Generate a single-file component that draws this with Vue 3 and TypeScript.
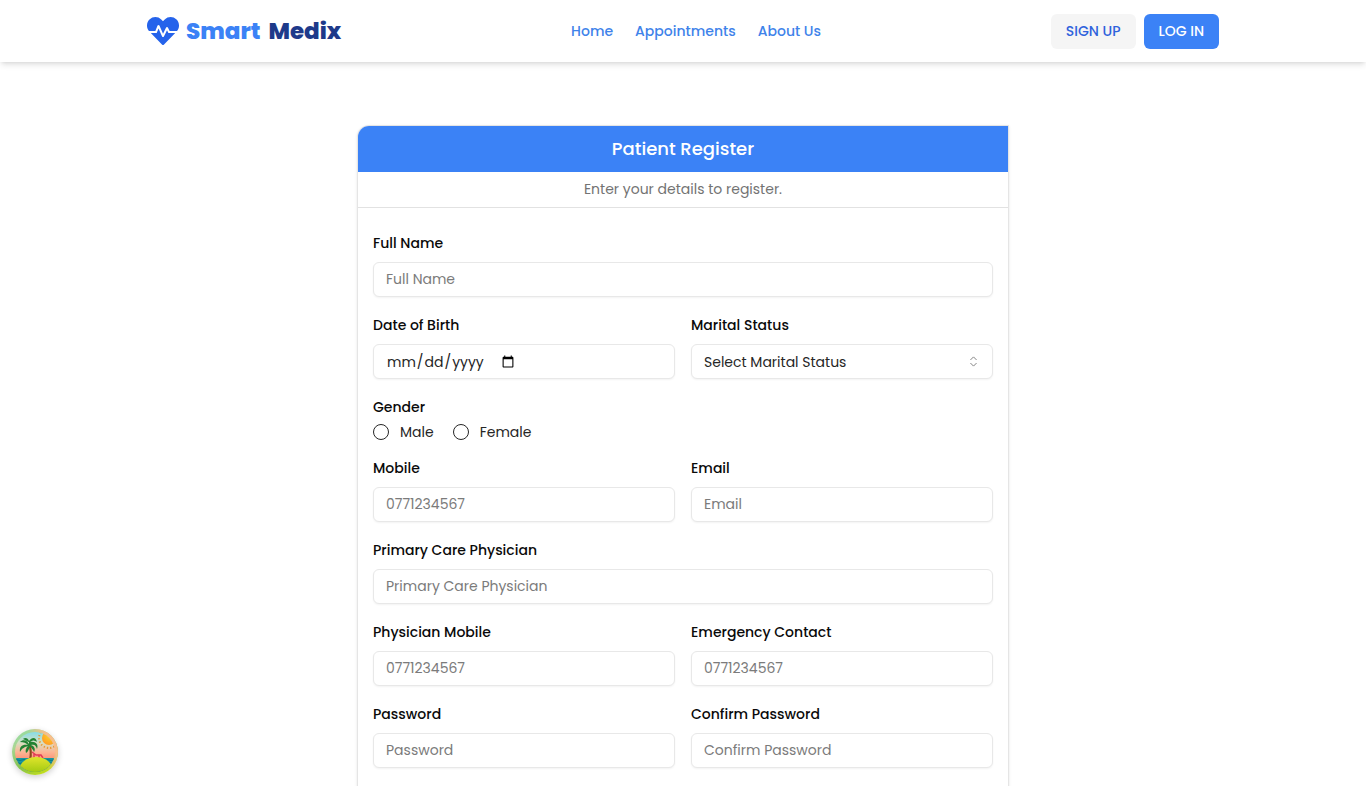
<script setup lang="ts">
import { reactive } from 'vue'

interface Field {
  id: string
  label: string
  placeholder?: string
  type: 'text' | 'tel' | 'email' | 'password' | 'date' | 'select' | 'radio'
  wide?: boolean
  options?: string[]
}

const links = ['Home', 'Appointments', 'About Us']

const fields: Field[] = [
  { id: 'fullName', label: 'Full Name', placeholder: 'Full Name', type: 'text', wide: true },
  { id: 'birthDate', label: 'Date of Birth', type: 'date' },
  {
    id: 'maritalStatus',
    label: 'Marital Status',
    placeholder: 'Select Marital Status',
    type: 'select',
    options: ['Single', 'Married', 'Divorced', 'Widowed'],
  },
  { id: 'gender', label: 'Gender', type: 'radio', wide: true, options: ['Male', 'Female'] },
  { id: 'mobile', label: 'Mobile', placeholder: '0771234567', type: 'tel' },
  { id: 'email', label: 'Email', placeholder: 'Email', type: 'email' },
  { id: 'physician', label: 'Primary Care Physician', placeholder: 'Primary Care Physician', type: 'text', wide: true },
  { id: 'physicianMobile', label: 'Physician Mobile', placeholder: '0771234567', type: 'tel' },
  { id: 'emergency', label: 'Emergency Contact', placeholder: '0771234567', type: 'tel' },
  { id: 'password', label: 'Password', placeholder: 'Password', type: 'password' },
  { id: 'confirmPassword', label: 'Confirm Password', placeholder: 'Confirm Password', type: 'password' },
]

const form = reactive<Record<string, string>>(Object.fromEntries(fields.map((f) => [f.id, ''])))
</script>

<template>
  <div class="page">
    <header class="topbar">
      <div class="topbar-inner">
        <a class="brand" href="#">
          <svg class="brand-icon" viewBox="0 0 512 512" aria-hidden="true">
            <path
              fill="currentColor"
              d="M320.2 243.8l-49.7 99.4c-6 12.1-23.4 11.7-28.9-.6l-56.9-126.3-30 71.7H60.6l182.5 186.5c7.1 7.3 18.6 7.3 25.7 0L451.4 288H342.3l-22.1-44.2zM473.7 73.9l-2.4-2.5c-51.5-52.6-135.8-52.6-187.4 0L256 100l-27.9-28.5c-51.5-52.7-135.9-52.7-187.4 0l-2.4 2.4C-10.4 123.7-12.5 203 31 256h102.4l35.9-86.2c5.4-12.9 23.6-13.1 29.2-.4l58.2 129.3 49-97.9c5.9-11.8 22.7-11.8 28.6 0l27.6 55.2H481c43.5-53 41.4-132.3-7.3-182.1z"
            />
          </svg>
          <span class="brand-name"><span>Smart</span> <span class="brand-dark">Medix</span></span>
        </a>
        <nav class="nav">
          <a v-for="link in links" :key="link" href="#">{{ link }}</a>
        </nav>
        <div class="actions">
          <button type="button" class="btn btn-light">SIGN UP</button>
          <button type="button" class="btn btn-primary">LOG IN</button>
        </div>
      </div>
    </header>

    <main class="content">
      <form class="card" @submit.prevent>
        <h1 class="card-title">Patient Register</h1>
        <p class="card-note">Enter your details to register.</p>
        <div class="fields">
          <template v-for="f in fields" :key="f.id">
            <fieldset v-if="f.type === 'radio'" class="field wide">
              <legend class="label">{{ f.label }}</legend>
              <div class="radios">
                <label v-for="o in f.options" :key="o" class="radio">
                  <input v-model="form[f.id]" type="radio" :name="f.id" :value="o" />
                  <span>{{ o }}</span>
                </label>
              </div>
            </fieldset>
            <div v-else class="field" :class="{ wide: f.wide }">
              <label class="label" :for="f.id">{{ f.label }}</label>
              <div v-if="f.type === 'select'" class="select">
                <select :id="f.id" v-model="form[f.id]" class="control">
                  <option value="">{{ f.placeholder }}</option>
                  <option v-for="o in f.options" :key="o">{{ o }}</option>
                </select>
                <svg class="chevrons" viewBox="0 0 15 15" aria-hidden="true">
                  <path d="M4.7 5.7 7.5 2.9l2.8 2.8M4.7 9.3l2.8 2.8 2.8-2.8" fill="none" stroke="currentColor" stroke-linecap="round" stroke-linejoin="round" />
                </svg>
              </div>
              <input v-else :id="f.id" v-model="form[f.id]" class="control" :type="f.type" :placeholder="f.placeholder" />
            </div>
          </template>
        </div>
      </form>
    </main>

    <button type="button" class="island" aria-label="Open developer tools">
      <svg viewBox="0 0 46 46" aria-hidden="true">
        <defs>
          <linearGradient id="rim" x1="0" y1="0" x2="0.6" y2="1">
            <stop offset="0" stop-color="#86dfa6" />
            <stop offset="0.3" stop-color="#a9d695" />
            <stop offset="0.7" stop-color="#82c24c" />
            <stop offset="1" stop-color="#bfdc1e" />
          </linearGradient>
          <linearGradient id="rimWarm" x1="0.4" y1="0.6" x2="1" y2="0.3">
            <stop offset="0.3" stop-color="#f9bd8c" stop-opacity="0" />
            <stop offset="0.8" stop-color="#f9bd8c" />
          </linearGradient>
          <linearGradient id="sky" x1="0" y1="0" x2="0" y2="1">
            <stop offset="0" stop-color="#6fdcf2" />
            <stop offset="0.3" stop-color="#d8dfc2" />
            <stop offset="0.5" stop-color="#fbb695" />
            <stop offset="0.7" stop-color="#ff8a70" />
          </linearGradient>
          <linearGradient id="sand" x1="0" y1="0" x2="0" y2="1">
            <stop offset="0" stop-color="#e0e42c" />
            <stop offset="0.6" stop-color="#9cc80e" />
          </linearGradient>
          <radialGradient id="sun" cx="0.6" cy="0.3" r="0.7">
            <stop offset="0" stop-color="#ffd62e" />
            <stop offset="1" stop-color="#ff9d22" />
          </radialGradient>
          <clipPath id="disc"><circle cx="23" cy="23" r="20" /></clipPath>
        </defs>
        <circle cx="23" cy="23" r="23" fill="url(#rim)" />
        <circle cx="23" cy="23" r="23" fill="url(#rimWarm)" />
        <g clip-path="url(#disc)">
          <path d="M0 0h46v46H0z" fill="url(#sky)" />
          <path d="M0 29h46v17H0z" fill="#1695a0" />
          <path d="M2 31q2-1 4 0t4 0 4 0M33 31q2-1 4 0t4 0 4 0M2 34q2-1 4 0t4 0M35 34q2-1 4 0t4 0" fill="none" stroke="#087985" />
          <circle cx="37" cy="9" r="10" fill="none" stroke="#e59a36" stroke-width="2" stroke-dasharray="1.3 2" />
          <circle cx="37" cy="9" r="7" fill="url(#sun)" />
          <path d="m20 23 4 3h5l2 3M22 25v4M27 26v3" fill="none" stroke="#e13c55" stroke-width="1.5" />
          <path d="M17 15q3 7 1 16" fill="none" stroke="#8b4a1d" stroke-width="2.2" />
          <ellipse cx="24" cy="42" rx="17" ry="14" fill="url(#sand)" />
          <path
            d="M17 15c-2-4-6-5-9-2 4 0 6 1 8 3-5-1-9 1-8 7 2-4 5-5 8-6-2 2-3 4-2 7 2-1 3-4 4-7 1 2 3 3 4 6 2-3 0-6-3-7 4-1 5 1 6 4 2-5-2-8-7-7 2-2 4-2 7 0-1-5-5-5-8-1-1-3-4-4-6-2 3 1 5 3 6 3Z"
            fill="#238233"
          />
        </g>
      </svg>
    </button>
  </div>
</template>

<style>
body {
  background: #fff;
}
</style>

<style scoped>
.page {
  min-height: 100vh;
  color: #0a0a0a;
  font-family: Poppins, Inter, "Open Sans", sans-serif;
  font-size: 14px;
  line-height: 20px;
}

.page *,
.page *::before {
  box-sizing: border-box;
}

button,
input,
select {
  font: inherit;
  color: inherit;
}

.topbar {
  background: #fff;
  box-shadow: 0 4px 6px -1px rgba(0, 0, 0, 0.1), 0 2px 4px -2px rgba(0, 0, 0, 0.1);
}

.topbar-inner {
  display: flex;
  align-items: center;
  justify-content: space-between;
  max-width: 1072px;
  height: 62px;
  margin: 0 auto;
}

.brand {
  display: flex;
  align-items: center;
  gap: 7px;
  color: #2563eb;
  text-decoration: none;
}

.brand-icon {
  width: 32px;
  height: 32px;
}

.brand-name {
  display: flex;
  gap: 8px;
  color: #3b82f6;
  font-size: 23px;
  font-weight: 800;
  line-height: 32px;
}

.brand-dark {
  color: #1e3a8a;
}

.nav {
  display: flex;
  gap: 22px;
}

.nav a {
  color: #3f83ea;
  font-weight: 500;
  text-decoration: none;
}

.actions {
  display: flex;
  gap: 8px;
}

.btn {
  height: 35px;
  padding: 0 15px;
  border: 0;
  border-radius: 6px;
  font-weight: 500;
}

.btn-light {
  background: #f5f5f5;
  color: #2f62dc;
}

.btn-primary {
  background: #3b82f6;
  color: #fff;
}

.content {
  padding: 63px 16px 0;
}

.card {
  max-width: 652px;
  margin: 0 auto;
  border: 1px solid #e5e5e5;
  border-bottom: 0;
  border-radius: 12px 0 0 0;
  box-shadow: 0 1px 3px rgba(0, 0, 0, 0.1);
}

.card-title {
  margin: 0;
  padding: 9px 0;
  border-radius: 11px 0 0 0;
  background: #3b82f6;
  color: #fff;
  font-size: 18px;
  font-weight: 500;
  line-height: 28px;
  text-align: center;
}

.card-note {
  margin: 0;
  padding: 7px 0 8px;
  border-bottom: 1px solid #e2e2e2;
  color: #737373;
  text-align: center;
}

.fields {
  display: grid;
  grid-template-columns: 1fr 1fr;
  gap: 18px 16px;
  padding: 25px 15px 24px;
}

.field {
  min-width: 0;
  margin: 0;
  padding: 0;
  border: 0;
}

.wide {
  grid-column: 1 / -1;
}

.label {
  display: block;
  padding: 0;
  font-weight: 500;
}

.control {
  display: block;
  width: 100%;
  height: 35px;
  margin-top: 9px;
  padding: 0 12px;
  border: 1px solid #e8e8e8;
  border-radius: 6px;
  background: #fff;
  box-shadow: 0 1px 2px rgba(0, 0, 0, 0.05);
  color: #262626;
}

.control::placeholder {
  color: #7b7b7b;
  opacity: 1;
}

.control::-webkit-datetime-edit {
  flex: none;
}

.control::-webkit-calendar-picker-indicator {
  margin-left: -4px;
}

.select {
  position: relative;
}

.select .control {
  appearance: none;
}

.chevrons {
  position: absolute;
  top: 10px;
  right: 12px;
  width: 15px;
  height: 15px;
  color: #858585;
  pointer-events: none;
}

.radios {
  display: flex;
  gap: 19px;
  margin-top: 7px;
}

.radio {
  display: flex;
  align-items: center;
  gap: 11px;
  color: #262626;
  line-height: 16px;
}

.radio input {
  width: 16px;
  height: 16px;
  margin: 0;
  border: 1px solid #262626;
  border-radius: 50%;
  appearance: none;
}

.radio input:checked {
  background: radial-gradient(circle, #262626 4px, transparent 5px);
}

.island {
  position: fixed;
  bottom: 11px;
  left: 12px;
  width: 46px;
  height: 46px;
  padding: 0;
  border: 0;
  border-radius: 50%;
  background: none;
  box-shadow: 0 2px 6px rgba(0, 0, 0, 0.2);
}

.island svg {
  display: block;
}
</style>
